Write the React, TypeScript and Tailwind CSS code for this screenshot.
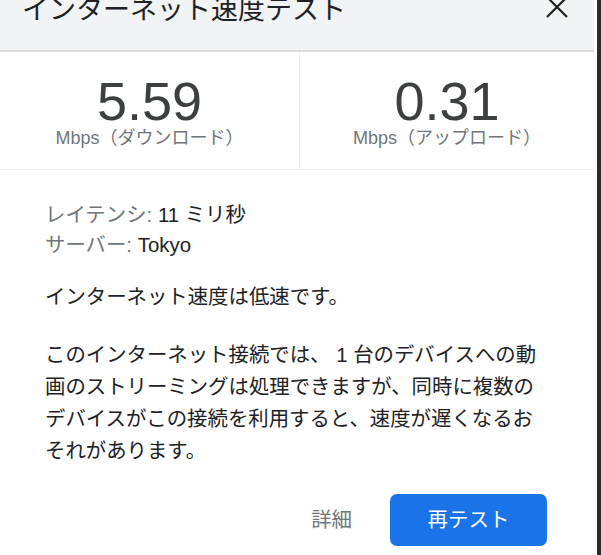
export default function App() {
  const font = "font-['Liberation_Sans','Noto_Sans_CJK_JP',sans-serif]";

  return (
    <div className={`flex h-[555px] w-[601px] overflow-hidden bg-white ${font}`}>
      <div className="flex w-[597px] flex-col border-r-[3px] border-white">
        {/* header */}
        <div className="flex h-[52px] items-start justify-between border-b-2 border-[#dcdcdc] bg-[#f1f3f4] pl-[22px] pr-[26px]">
          <h1 className="-mt-[3px] text-[27px] font-normal leading-[27px] text-[#202124]">
            インターネット速度テスト
          </h1>
          <svg
            className="-mt-[4px]"
            width="22"
            height="22"
            viewBox="0 0 22 22"
            fill="none"
            stroke="#202124"
            strokeWidth="2.2"
          >
            <path d="M1 1L21 21M21 1L1 21" />
          </svg>
        </div>

        {/* results */}
        <div className="grid grid-cols-[300px_1fr] border-b border-[#f0f0f0]">
          <div className="flex flex-col items-center border-r border-[#f0f0f0] pt-[23px] pb-[21px]">
            <span className="text-[54px] leading-[53px] text-[#3c4043]">5.59</span>
            <span className="text-[18px] leading-[20px] text-[#70757a]">Mbps（ダウンロード）</span>
          </div>
          <div className="flex flex-col items-center pt-[23px] pb-[21px]">
            <span className="text-[54px] leading-[53px] text-[#3c4043]">0.31</span>
            <span className="text-[18px] leading-[20px] text-[#70757a]">Mbps（アップロード）</span>
          </div>
        </div>

        {/* details */}
        <div className="flex flex-col pl-[45px] pr-[47px] pt-[30px]">
          <div className="text-[20.4px] leading-[30px]">
            <p>
              <span className="text-[#70757a]">レイテンシ: </span>
              <span className="text-[#202124]">11 ミリ秒</span>
            </p>
            <p>
              <span className="text-[#70757a]">サーバー: </span>
              <span className="text-[#202124]">Tokyo</span>
            </p>
          </div>
          <p className="mt-[21px] text-[20.4px] leading-[32px] text-[#202124]">
            インターネット速度は低速です。
          </p>
          <p className="mt-[26px] w-[505px] text-[20.4px] leading-[32px] text-[#202124]">
            このインターネット接続では、{"\u00a0"}1 台のデバイスへの動画のストリーミングは処理できますが、同時に複数のデバイスがこの接続を利用すると、速度が遅くなるおそれがあります。
          </p>
          <div className="mt-[27px] flex items-center justify-end gap-[38px]">
            <button className="text-[20.4px] leading-[28px] text-[#70757a]">詳細</button>
            <button className="h-[52px] w-[157px] rounded-[7px] bg-[#1a73e8] text-[20.5px] text-white">
              再テスト
            </button>
          </div>
        </div>
      </div>
      <div className="w-[4px] bg-[#2b2b2b]" />
    </div>
  );
}
